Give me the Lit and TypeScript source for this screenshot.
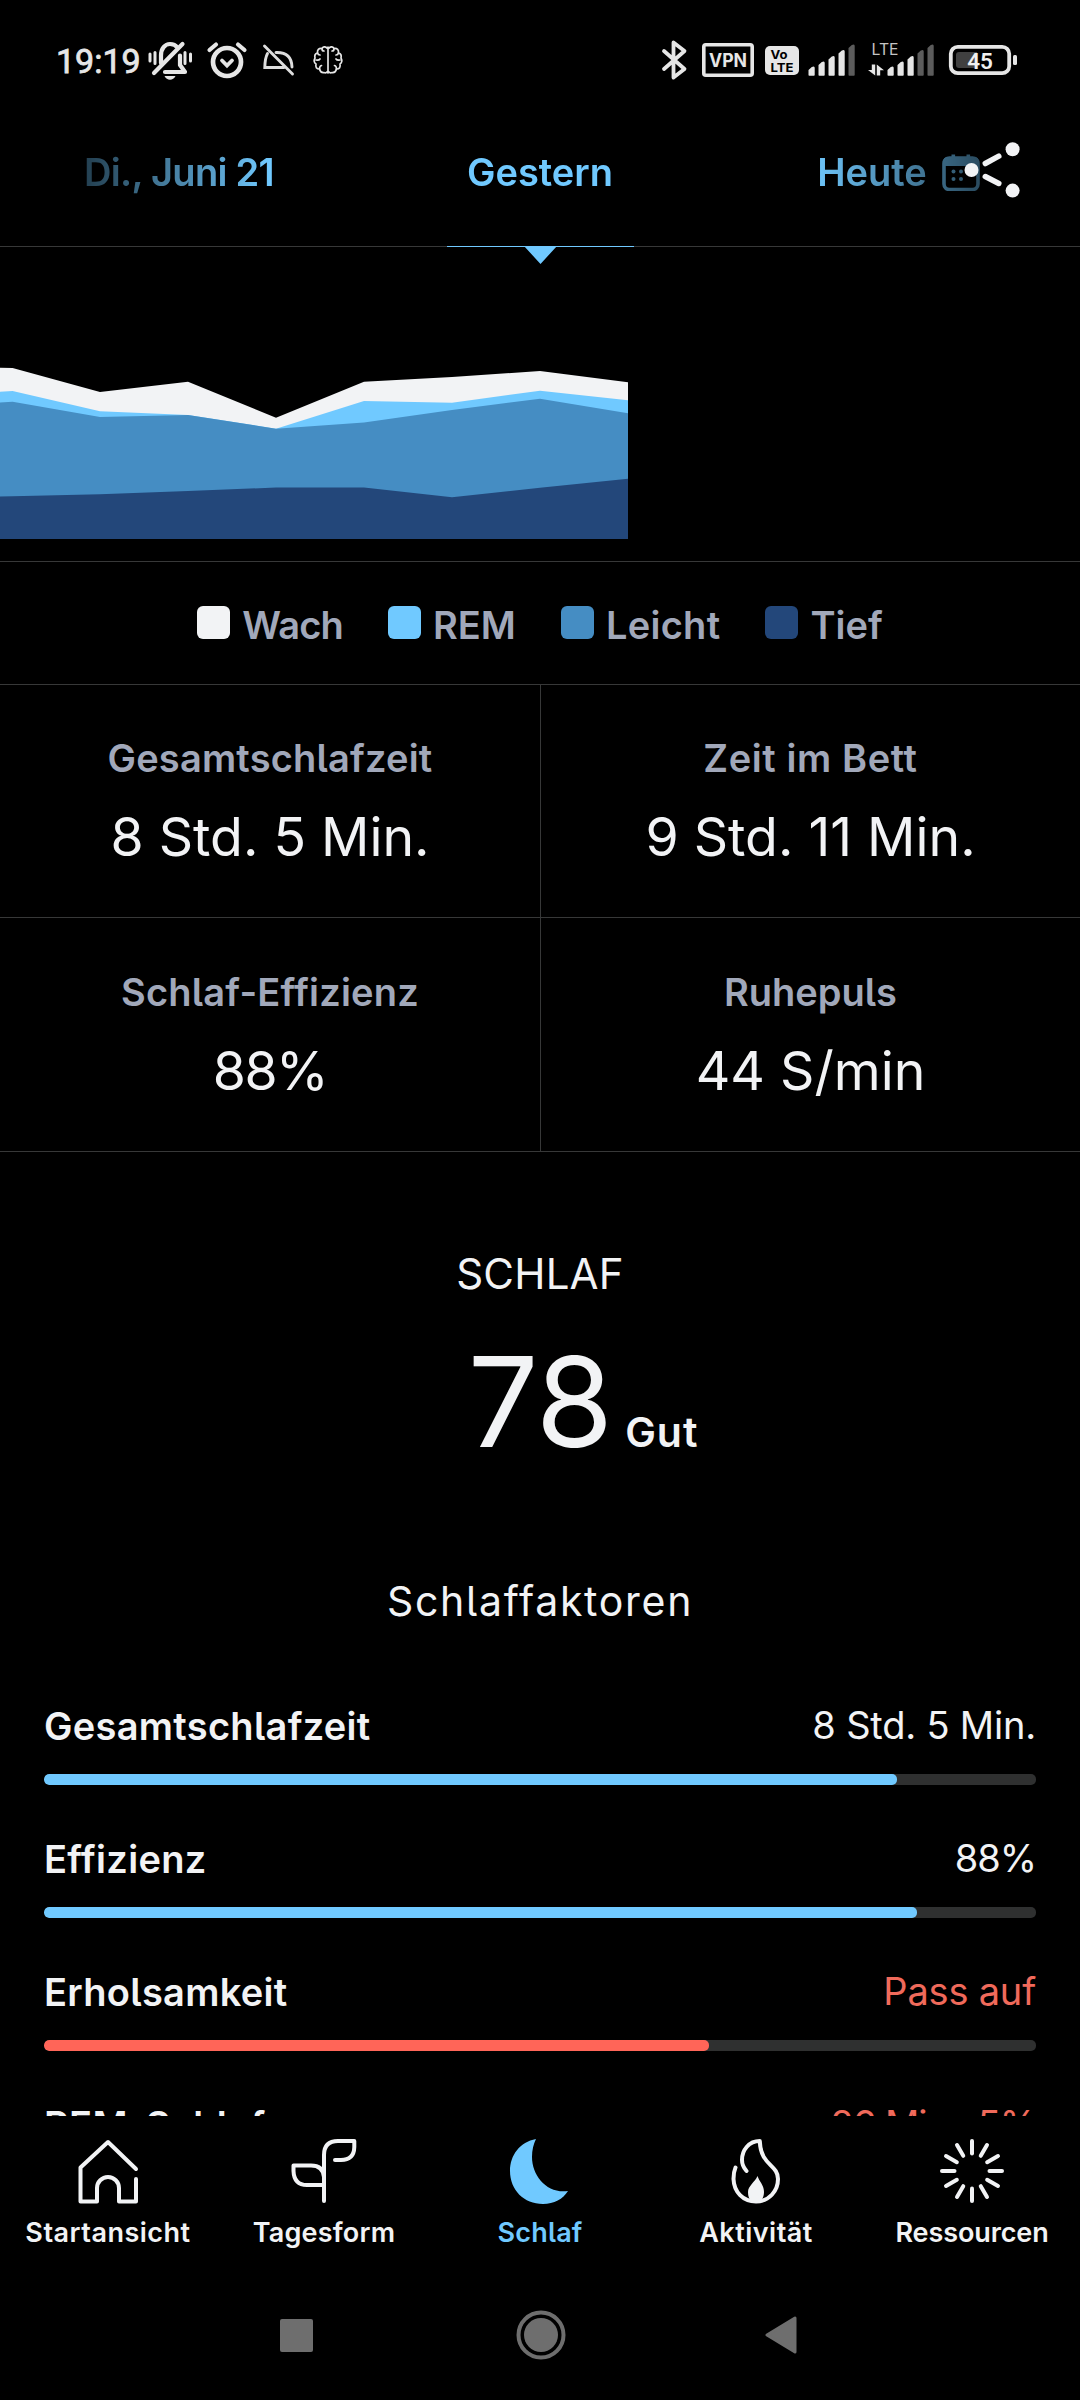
import { LitElement, html, svg, css } from "lit";
import { customElement, property } from "lit/decorators.js";
import { classMap } from "lit/directives/class-map.js";
import { styleMap } from "lit/directives/style-map.js";

@customElement("status-bar")
class StatusBar extends LitElement {
  static styles = css`
    :host { display: block; color: #e6e6e6; }
    .bar { display: flex; align-items: center; justify-content: space-between; height: 120px; padding: 0 63px 0 56px; }
    .side { display: flex; align-items: center; }
    .time { font: 400 34px/40px Roboto, sans-serif; width: 84px; padding-top: 2px; -webkit-text-stroke: 0.8px #e6e6e6; }
    svg { display: block; overflow: visible; }
    .bell { margin-left: 7px; }
    .alarm { margin-left: 14px; }
    .dome { margin-left: 16px; }
    .brain { margin-left: 19px; }
    .vpn { margin-left: 15px; }
    .volte { margin-left: 11px; }
    .sig { margin-left: 9px; }
    .lte { margin-left: 12px; }
    .bat { margin-left: 14px; }
    .t { font-family: Inter, sans-serif; }
    .r { font-family: Roboto, sans-serif; }
  `;

  private bars(x: number, lit: number) {
    const tops = [27, 22, 16.5, 10.5, 5];
    return tops.map((t, i) => svg`<path d="M${x + i * 10} 35V${t + 3}l3.300-3q3-1.600 2.900 1V35q0 .8-.8.8h-4.600q-.8 0-.8-.8z" fill=${i < lit ? "#e6e6e6" : "#5c5c5c"}/>`);
  }

  render() {
    return html`<div class="bar">
      <div class="side">
        <div class="time">19:19</div>
        <svg class="bell" width="46" height="40" viewBox="0 0 46 40" fill="none" stroke="#e6e6e6" stroke-linecap="round">
          <path d="M3 14v7M8 12.500v11M38 12.500v11M43.500 14v7" stroke-width="3"/>
          <path d="M14 23v-7.500C14 8.500 18 4 23 4c3.500 0 6 1.500 7.500 3.500M18 32h20l-5-7V15.500" stroke-width="4.200" stroke-linejoin="round"/>
          <path d="M35.500 4 7 33" stroke-width="4.200"/>
          <path d="M17.500 36h11q-2 3.800-5.500 3.800T17.500 36z" fill="#e6e6e6" stroke="none"/>
        </svg>
        <svg class="alarm" width="40" height="38" viewBox="0 0 40 38" fill="none" stroke="#e6e6e6" stroke-linecap="round">
          <circle cx="20" cy="21" r="14" stroke-width="4.700"/>
          <path d="M15 19.500 20 24.500l5-5" stroke-width="3.800"/>
          <path d="m2.500 9 6.500-5.500M31 3.500 37.500 9" stroke-width="4.200"/>
        </svg>
        <svg class="dome" width="31" height="32" viewBox="0 0 31 32" fill="none" stroke="#dedede" stroke-width="2.900" stroke-linecap="round">
          <path d="M1.500 2 29.500 30M4.500 9.500Q2 14 1.800 23.500H21M13 8.500q15.500-.5 16 14.500"/>
        </svg>
        <svg class="brain" width="30" height="30" viewBox="0 0 30 30" fill="none" stroke="#e6e6e6" stroke-width="1.700" stroke-linecap="round" stroke-linejoin="round">
          <path d="M15 2v26M14 3q-3-2.500-5 .5Q4 3 4.500 8 1 9 2 13q-2 4 1 6-1 5 3.500 5 1 4 4.500 3.500 2 1 3.500-1M16 3q3-2.500 5 .5 5-.5 4.500 4.500 3.500 1 2.500 5 2 4-1 6 1 5-3.500 5-1 4-4.500 3.500-2 1-3.500-1"/>
          <path d="M9 4q0 2 2 2M4.500 8q.5 2 2.500 2M3 15q3 .5 4-1M6.500 24q0-3 2-3.500M21 4q0 2-2 2M25.500 8q-.5 2-2.500 2M27 15q-3 .5-4-1M23.500 24q0-3-2-3.500"/>
        </svg>
      </div>
      <div class="side">
        <svg width="25" height="40" viewBox="0 0 25 40" fill="none" stroke="#e6e6e6" stroke-width="3.800" stroke-linecap="round" stroke-linejoin="round">
          <path d="M2 11 22.500 29 11.500 37.500V2.500L22.500 11 2 29"/>
        </svg>
        <svg class="vpn" width="52" height="34" viewBox="0 0 52 34">
          <rect x="1.800" y="1.800" width="48.400" height="30.400" rx="2" fill="none" stroke="#e6e6e6" stroke-width="3.600"/>
          <text class="t" x="26" y="23.500" font-size="18.500" font-weight="700" fill="#e6e6e6" text-anchor="middle" textLength="38" lengthAdjust="spacingAndGlyphs">VPN</text>
        </svg>
        <svg class="volte" width="34" height="29" viewBox="0 0 34 29">
          <rect width="34" height="29" rx="5" fill="#e6e6e6"/>
          <text class="t" x="5.500" y="12.800" font-size="12" font-weight="700" textLength="17" lengthAdjust="spacingAndGlyphs">Vo</text>
          <text class="t" x="5.500" y="25.500" font-size="12" font-weight="700" textLength="23" lengthAdjust="spacingAndGlyphs">LTE</text>
        </svg>
        <svg class="sig" width="48" height="40" viewBox="0 0 48 40">${this.bars(0.5, 4)}</svg>
        <svg class="lte" width="67" height="40" viewBox="0 0 67 40">
          <text class="t" x="3.500" y="14.800" font-size="15.500" fill="#c4c4c4" textLength="27" lengthAdjust="spacingAndGlyphs">LTE</text>
          <path d="M7.200 24.500v11L0 30h3.800v-5.500zM8.800 35.500v-11l7.200 5.700h-3.800v5.300z" fill="#e6e6e6"/>
          ${this.bars(19.5, 3)}
        </svg>
        <svg class="bat" width="68" height="30" viewBox="0 0 68 30">
          <rect x="1.800" y="1.800" width="58.400" height="26.400" rx="7" fill="none" stroke="#e6e6e6" stroke-width="3.800"/>
          <path d="M28 7v16H10q-3 0-3-3V10q0-3 3-3z" fill="#404040"/>
          <rect x="64" y="10" width="4" height="10" rx="1.500" fill="#e6e6e6"/>
          <text class="r" x="31" y="23.500" font-size="22.500" font-weight="600" fill="#f0f0f0" text-anchor="middle">45</text>
        </svg>
      </div>
    </div>`;
  }
}

@customElement("date-tabs")
class DateTabs extends LitElement {
  static styles = css`
    :host { display: block; position: relative; height: 126px; border-bottom: 1px solid #373838; }
    .tabs {
      display: grid; grid-template-columns: repeat(3, 1fr); height: 104px; align-items: center;
      font-weight: 600; font-size: 38px; line-height: 48px; color: #70c9ff;
      -webkit-mask-image: linear-gradient(to right, transparent 0, #000 270px, #000 810px, transparent 1080px);
      mask-image: linear-gradient(to right, transparent 0, #000 270px, #000 810px, transparent 1080px);
    }
    .tab { display: flex; align-items: center; justify-content: center; gap: 15px; white-space: nowrap; }
    .date { letter-spacing: -0.7px; padding-right: 2px; }
    .today { padding-right: 3px; }
    .mark { position: absolute; left: 447px; top: 126px; }
    .share { position: absolute; left: 960px; top: 18px; }
  `;

  render() {
    return html`<div class="tabs">
        <div class="tab date">Di., Juni 21</div>
        <div class="tab">Gestern</div>
        <div class="tab today">Heute
          <svg width="38" height="38" viewBox="0 0 38 38">
            <rect x="2" y="5" width="34" height="31.500" rx="5.500" fill="none" stroke="#70c9ff" stroke-width="3.600"/>
            <path d="M1 13V9q0-5 5-5h26q5 0 5 5v4zM9.500 1.500h3.600V5H9.500zM24.500 1.500h3.600V5h-3.600z" fill="#70c9ff"/>
            <g fill="#70c9ff"><circle cx="11.500" cy="18.500" r="2"/><circle cx="19" cy="18.500" r="2"/><circle cx="26.500" cy="18.500" r="2"/><circle cx="11.500" cy="26" r="2"/><circle cx="19" cy="26" r="2"/></g>
          </svg>
        </div>
      </div>
      <svg class="mark" width="187" height="19" viewBox="0 0 187 19" fill="#70c9ff"><path d="M0 0h187v1H0zM77 0h33L93.500 18z"/></svg>
      <svg class="share" width="64" height="64" viewBox="0 0 64 64" fill="#f2f3f5" stroke="#f2f3f5" stroke-width="5.500" stroke-linecap="round">
        <g stroke="none"><circle cx="11.500" cy="32" r="7"/><circle cx="52.600" cy="11.300" r="7"/><circle cx="52.600" cy="52.600" r="7"/></g>
        <path d="m25.300 25.500 13.500-7.300M25.300 38.500l13.500 7"/>
      </svg>`;
  }
}

@customElement("sleep-chart")
class SleepChart extends LitElement {
  static styles = css`
    :host { display: block; border-bottom: 1px solid #373838; }
    svg { display: block; }
  `;

  private xs = [-76, 12.600, 100, 188, 276, 364, 452, 540, 628];
  private layers = [
    { fill: "#f2f3f5", top: [119, 121, 145, 134.700, 170.700, 134.700, 130, 124, 135.300] },
    { fill: "#70c9ff", top: [149, 144, 164.300, 168, 181.700, 154, 155.700, 143.700, 153.300] },
    { fill: "#458dc3", top: [160, 154.700, 170, 168, 181.700, 175.500, 163, 151.700, 166.300] },
    { fill: "#23477a", top: [251, 249.300, 247.300, 244, 240.500, 240.500, 250.300, 240.700, 231.700] },
  ];

  render() {
    return html`<svg width="1080" height="314" viewBox="0 0 1080 314">
      ${this.layers.map((l) => svg`<polygon fill=${l.fill} points=${"-76,292 " + l.top.map((y, i) => `${this.xs[i]},${y}`).join(" ") + " 628,292"}/>`)}
    </svg>`;
  }
}

@customElement("factor-row")
class FactorRow extends LitElement {
  @property() name = "";
  @property() value = "";
  @property({ type: Number }) amount = 0;
  @property({ type: Boolean }) warn = false;

  static styles = css`
    :host { display: block; height: 133px; }
    .head { display: flex; justify-content: space-between; line-height: 48px; font-size: 38px; color: #f2f3f5; }
    .name { font-weight: 600; padding-top: 1px; letter-spacing: 0.3px; }
    .value { font-weight: 400; letter-spacing: -0.2px; }
    .percent .value { letter-spacing: -1px; }
    .warn .value { color: #f06a5b; }
    .track { margin-top: 24px; height: 11px; border-radius: 5px; background: #2f3030; overflow: hidden; }
    .fill { height: 100%; border-radius: 5px; background: #70c9ff; }
    .warn .fill { background: #ff6558; }
  `;

  render() {
    return html`<div class=${classMap({ row: true, warn: this.warn, percent: this.value.endsWith("%") })}>
      <div class="head"><span class="name">${this.name}</span><span class="value">${this.value}</span></div>
      <div class="track"><div class="fill" style=${styleMap({ width: this.amount + "%" })}></div></div>
    </div>`;
  }
}

@customElement("bottom-nav")
class BottomNav extends LitElement {
  static styles = css`
    :host { display: block; background: #000; }
    .nav { display: grid; grid-template-columns: repeat(5, 1fr); height: 154px; }
    .item { display: flex; flex-direction: column; align-items: center; color: #f2f3f5; padding-top: 20px; }
    .label { font-size: 27px; font-weight: 600; line-height: 32px; margin-top: 9px; white-space: nowrap; letter-spacing: 0.2px; }
    .loose .label { letter-spacing: 0.5px; }
    .tight .label { letter-spacing: -0.1px; }
    .active { color: #70c9ff; }
    .sys { display: grid; grid-template-columns: 1fr auto 1fr; height: 130px; align-items: center; justify-items: center; padding: 0 180px 0 181px; }
    svg { display: block; }
    .square { justify-self: end; margin-right: 203px; }
    .back { justify-self: start; margin-left: 199px; }
  `;

  private items = [
    { label: "Startansicht", fit: "loose", icon: svg`<path d="M64 33 36 6 8.500 31.500V65.500H25V52a11 11 0 0 1 22 0V65.500H64V43"/>` },
    { label: "Tagesform", fit: "", icon: svg`<path d="M36 65V19Q36 5 50 5H66.300V11Q66 24 53 24H47M36 41Q35 29.500 23 29.500H5.500V35Q6 49 19 49H36"/>` },
    { label: "Schlaf", fit: "", active: true, icon: svg`<path stroke="none" fill="currentColor" d="M32 3C16 6 6 19 6 35c0 19 14 33 33 33 11 0 20-5 25-13C43 58 28 40 28 21c0-7 1.500-13 4-18z"/>` },
    { label: "Aktivität", fit: "loose", icon: svg`<path d="M15.500 31.500Q13.500 36 13.500 43C14 56 23 65.500 36 65.500S58 55 58 43C58 28 40.500 30 39.800 5 29 5 22 14 22 24q0 6 4.500 11"/><path stroke="none" fill="currentColor" d="M37.500 40c1.500 5 6.500 9 6.500 16 0 4-1.500 7-3 9H31q-3-3-3-9c0-6 7-10 9.500-16z"/>` },
    { label: "Ressourcen", fit: "tight", icon: svg`${Array.from({ length: 12 }, (_, i) => svg`<path d="M36 5v12.500" transform="rotate(${i * 30} 36 35)"/>`)}` },
  ];

  render() {
    return html`<div class="nav">
        ${this.items.map((it) => html`<div class=${classMap({ item: true, active: !!it.active, loose: it.fit === "loose", tight: it.fit === "tight" })}>
          <svg width="72" height="72" viewBox="0 0 72 72" fill="none" stroke="currentColor" stroke-width="4" stroke-linecap="round" stroke-linejoin="round">${it.icon}</svg>
          <div class="label">${it.label}</div>
        </div>`)}
      </div>
      <div class="sys">
        <svg class="square" width="33" height="33" viewBox="0 0 33 33"><rect width="33" height="33" rx="2" fill="#6e6e6e"/></svg>
        <svg width="50" height="50" viewBox="0 0 50 50"><circle cx="25" cy="25" r="22.500" fill="none" stroke="#6e6e6e" stroke-width="4"/><circle cx="25" cy="25" r="17" fill="#6e6e6e"/></svg>
        <svg class="back" width="32" height="38" viewBox="0 0 32 38"><path d="M2 19 30 2v34z" fill="#6e6e6e" stroke="#6e6e6e" stroke-width="3" stroke-linejoin="round"/></svg>
      </div>`;
  }
}

@customElement("app-root")
class AppRoot extends LitElement {
  static styles = css`
    :host {
      display: flex; flex-direction: column; width: 1080px; height: 2400px; overflow: hidden;
      background: #000; color: #f2f3f5; font-family: Inter, sans-serif; font-feature-settings: "cv05";
    }
    .content { flex: 1; min-height: 0; overflow: hidden; }
    .legend { display: flex; align-items: center; justify-content: center; gap: 45px; height: 121px; padding-bottom: 1px; border-bottom: 1px solid #373838; }
    .key { display: flex; align-items: center; gap: 12px; font-size: 38px; line-height: 48px; font-weight: 600; color: #a1a8ba; }
    .key span { padding-top: 5px; }
    .key:first-child { letter-spacing: -0.8px; }
    .key:nth-child(3) { letter-spacing: 0.3px; }
    .swatch { width: 33px; height: 33px; border-radius: 6px; }
    .awake { background: #f2f3f5; }
    .rem { background: #70c9ff; }
    .light { background: #458dc3; }
    .deep { background: #23477a; }
    .stats { display: grid; grid-template-columns: 1fr 1fr; }
    .stat { height: 233px; box-sizing: border-box; padding-top: 45px; text-align: center; border-bottom: 1px solid #373838; }
    .stat:nth-child(even) { border-left: 1px solid #373838; }
    .stat:nth-child(n + 3) { height: 234px; padding-top: 46px; }
    .label { font-size: 38px; line-height: 56px; font-weight: 600; color: #a1a8ba; letter-spacing: 0.2px; }
    .stat:nth-child(2) .label { letter-spacing: 0.6px; }
    .stat:nth-child(4) .label { letter-spacing: 0; }
    .num { font-size: 53.600px; line-height: 64px; margin-top: 19px; }
    .stat:nth-child(3) .num { letter-spacing: -1.500px; }
    .score { padding-top: 94px; }
    .title { text-align: center; font-size: 42px; line-height: 56px; letter-spacing: 0.2px; }
    .result { display: grid; grid-template-columns: 1fr auto 1fr; align-items: baseline; column-gap: 13px; margin-top: 25px; }
    .big { grid-column: 2; font-size: 125px; line-height: 150px; letter-spacing: -1px; }
    .verdict { font-size: 41px; font-weight: 600; letter-spacing: 1px; }
    .sub { text-align: center; font-size: 41px; line-height: 56px; letter-spacing: 1.700px; margin-top: 96px; }
    .factors { padding: 72px 44px 0; }
  `;

  private keys = [["awake", "Wach"], ["rem", "REM"], ["light", "Leicht"], ["deep", "Tief"]];
  private stats = [
    ["Gesamtschlafzeit", "8 Std. 5 Min."],
    ["Zeit im Bett", "9 Std. 11 Min."],
    ["Schlaf-Effizienz", "88%"],
    ["Ruhepuls", "44 S/min"],
  ];
  private factors = [
    { name: "Gesamtschlafzeit", value: "8 Std. 5 Min.", amount: 86, warn: false },
    { name: "Effizienz", value: "88%", amount: 88, warn: false },
    { name: "Erholsamkeit", value: "Pass auf", amount: 67, warn: true },
    { name: "REM-Schlaf", value: "26 Min., 5%", amount: 20, warn: true },
  ];

  render() {
    return html`
      <status-bar></status-bar>
      <date-tabs></date-tabs>
      <div class="content">
        <sleep-chart></sleep-chart>
        <div class="legend">
          ${this.keys.map(([c, t]) => html`<div class="key"><i class="swatch ${c}"></i><span>${t}</span></div>`)}
        </div>
        <div class="stats">
          ${this.stats.map(([l, v]) => html`<div class="stat"><div class="label">${l}</div><div class="num">${v}</div></div>`)}
        </div>
        <div class="score">
          <div class="title">SCHLAF</div>
          <div class="result"><div class="big">78</div><div class="verdict">Gut</div></div>
          <div class="sub">Schlaffaktoren</div>
        </div>
        <div class="factors">
          ${this.factors.map((f) => html`<factor-row .name=${f.name} .value=${f.value} .amount=${f.amount} .warn=${f.warn}></factor-row>`)}
        </div>
      </div>
      <bottom-nav></bottom-nav>
    `;
  }
}
